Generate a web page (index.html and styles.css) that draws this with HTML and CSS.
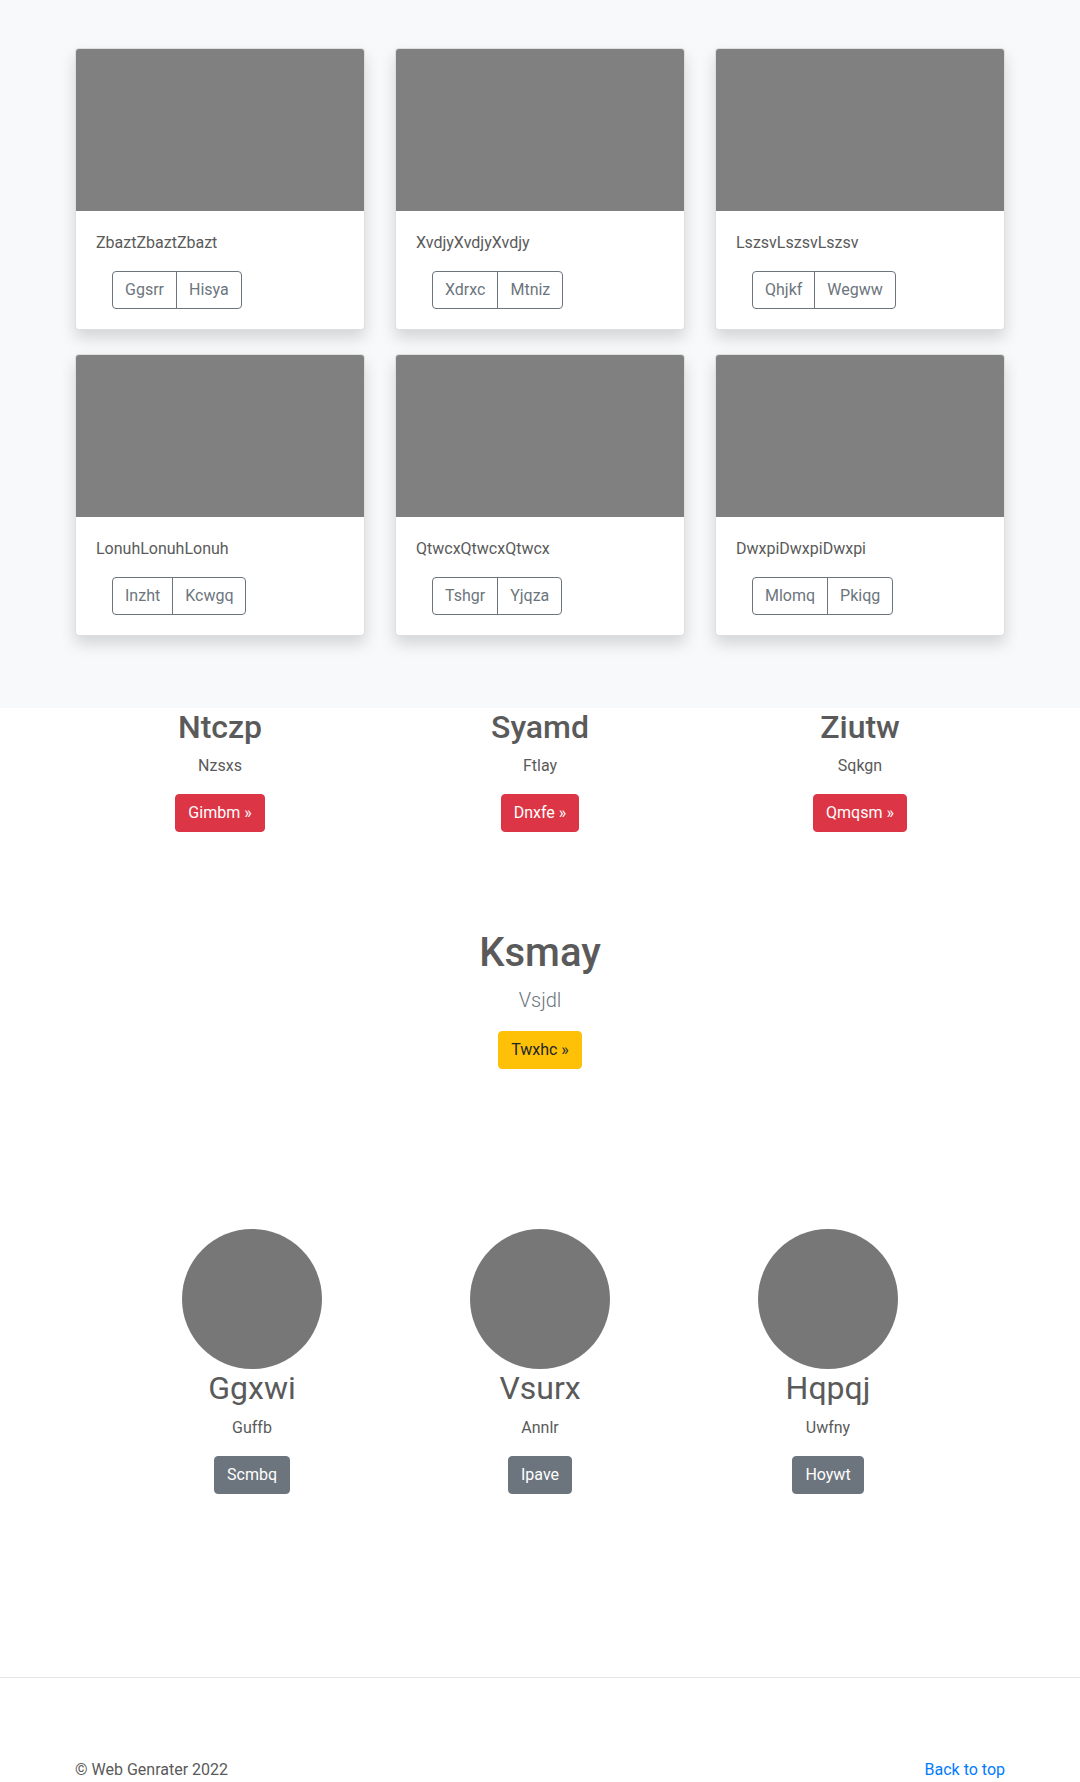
FILE: index.html
```html
<!DOCTYPE html>
<html lang="en">
<head>
<meta charset="utf-8">
<title>Web Genrater</title>
<link rel="stylesheet" href="styles.css">
</head>
<body>
<main>
  <section class="album">
    <div class="album-grid">
      <div class="card">
        <div class="card-img"></div>
        <div class="card-body">
          <p class="card-text">ZbaztZbaztZbazt</p>
          <div class="btn-group"><button class="btn btn-outline">Ggsrr</button><button class="btn btn-outline">Hisya</button></div>
        </div>
      </div>
      <div class="card">
        <div class="card-img"></div>
        <div class="card-body">
          <p class="card-text">XvdjyXvdjyXvdjy</p>
          <div class="btn-group"><button class="btn btn-outline">Xdrxc</button><button class="btn btn-outline">Mtniz</button></div>
        </div>
      </div>
      <div class="card">
        <div class="card-img"></div>
        <div class="card-body">
          <p class="card-text">LszsvLszsvLszsv</p>
          <div class="btn-group"><button class="btn btn-outline">Qhjkf</button><button class="btn btn-outline">Wegww</button></div>
        </div>
      </div>
      <div class="card">
        <div class="card-img"></div>
        <div class="card-body">
          <p class="card-text">LonuhLonuhLonuh</p>
          <div class="btn-group"><button class="btn btn-outline">Inzht</button><button class="btn btn-outline">Kcwgq</button></div>
        </div>
      </div>
      <div class="card">
        <div class="card-img"></div>
        <div class="card-body">
          <p class="card-text">QtwcxQtwcxQtwcx</p>
          <div class="btn-group"><button class="btn btn-outline">Tshgr</button><button class="btn btn-outline">Yjqza</button></div>
        </div>
      </div>
      <div class="card">
        <div class="card-img"></div>
        <div class="card-body">
          <p class="card-text">DwxpiDwxpiDwxpi</p>
          <div class="btn-group"><button class="btn btn-outline">Mlomq</button><button class="btn btn-outline">Pkiqg</button></div>
        </div>
      </div>
    </div>
  </section>

  <section class="features">
    <div class="feature">
      <h2 class="feature-title">Ntczp</h2>
      <p class="text">Nzsxs</p>
      <p class="text"><a class="btn btn-danger" href="#">Gimbm &raquo;</a></p>
    </div>
    <div class="feature">
      <h2 class="feature-title">Syamd</h2>
      <p class="text">Ftlay</p>
      <p class="text"><a class="btn btn-danger" href="#">Dnxfe &raquo;</a></p>
    </div>
    <div class="feature">
      <h2 class="feature-title">Ziutw</h2>
      <p class="text">Sqkgn</p>
      <p class="text"><a class="btn btn-danger" href="#">Qmqsm &raquo;</a></p>
    </div>
  </section>

  <section class="hero">
    <h1 class="hero-title">Ksmay</h1>
    <p class="lead">Vsjdl</p>
    <p class="text"><a class="btn btn-warning" href="#">Twxhc &raquo;</a></p>
  </section>

  <section class="marketing">
    <div class="person">
      <div class="avatar"></div>
      <h2 class="person-name">Ggxwi</h2>
      <p class="text">Guffb</p>
      <p class="text"><a class="btn btn-secondary" href="#">Scmbq</a></p>
    </div>
    <div class="person">
      <div class="avatar"></div>
      <h2 class="person-name">Vsurx</h2>
      <p class="text">Annlr</p>
      <p class="text"><a class="btn btn-secondary" href="#">Ipave</a></p>
    </div>
    <div class="person">
      <div class="avatar"></div>
      <h2 class="person-name">Hqpqj</h2>
      <p class="text">Uwfny</p>
      <p class="text"><a class="btn btn-secondary" href="#">Hoywt</a></p>
    </div>
  </section>

  <div class="divider"></div>

  <footer class="footer">
    <p class="text">&copy; Web Genrater 2022</p>
    <p class="text"><a class="link" href="#">Back to top</a></p>
  </footer>
</main>
</body>
</html>
```

FILE: styles.css
```css
* { box-sizing: border-box; }

body {
  margin: 0;
  font-family: Roboto, "Liberation Sans", sans-serif;
  font-size: 16px;
  line-height: 1.5;
  color: #5a5a5a;
  background: #fff;
}

.text { margin: 0 0 16px; }

/* album */
.album {
  background: #f8f9fa;
  padding: 48px 0 48px;
}
.album-grid {
  width: 930px;
  margin: 0 auto;
  display: grid;
  grid-template-columns: repeat(3, 1fr);
  column-gap: 30px;
}
.card {
  background: #fff;
  border: 1px solid rgba(0, 0, 0, .125);
  border-radius: 4px;
  box-shadow: 0 8px 16px rgba(0, 0, 0, .15);
  overflow: hidden;
  margin-bottom: 24px;
}
.card-img {
  height: 162px;
  background: #808080;
}
.card-body { padding: 20px; }
.card-text { margin: 0 0 16px; }

.btn-group {
  display: inline-flex;
  margin-left: 16px;
}

.btn {
  display: inline-block;
  font-family: inherit;
  font-size: 16px;
  line-height: 24px;
  padding: 6px 12px;
  border: 1px solid transparent;
  border-radius: 4px;
  text-decoration: none;
  font-weight: 400;
  cursor: pointer;
}
.btn-outline {
  background: transparent;
  color: #6c757d;
  border-color: #6c757d;
}
.btn-group .btn-outline:first-child {
  border-top-right-radius: 0;
  border-bottom-right-radius: 0;
}
.btn-group .btn-outline + .btn-outline {
  margin-left: -1px;
  border-top-left-radius: 0;
  border-bottom-left-radius: 0;
}
.btn-danger { background: #dc3545; border-color: #dc3545; color: #fff; }
.btn-warning { background: #ffc107; border-color: #ffc107; color: #212529; }
.btn-secondary { background: #6c757d; border-color: #6c757d; color: #fff; }

/* features */
.features {
  width: 960px;
  margin: 0 auto;
  display: grid;
  grid-template-columns: repeat(3, 1fr);
  text-align: center;
}
.feature { padding: 0 15px; }
.feature-title {
  font-size: 32px;
  font-weight: 500;
  line-height: 1.2;
  margin: 0 0 8px;
}

/* hero */
.hero {
  text-align: center;
  padding-top: 81px;
}
.hero-title {
  font-size: 40px;
  font-weight: 500;
  line-height: 1.2;
  margin: 0 0 8px;
}
.lead {
  font-size: 20px;
  font-weight: 300;
  line-height: 1.5;
  color: #6c757d;
  margin: 0 0 16px;
}

/* marketing */
.marketing {
  width: 864px;
  margin: 160px auto 0;
  display: grid;
  grid-template-columns: repeat(3, 1fr);
  text-align: center;
  padding-bottom: 167px;
}
.avatar {
  width: 140px;
  height: 140px;
  border-radius: 50%;
  background: #777;
  margin: 0 auto;
}
.person-name {
  font-size: 32px;
  font-weight: 400;
  line-height: 1.2;
  margin: 0 0 8px;
}

.divider {
  border-top: 1px solid rgba(0, 0, 0, .1);
}

.footer {
  width: 930px;
  margin: 0 auto;
  padding-top: 80px;
  display: flex;
  justify-content: space-between;
}
.link { color: #007bff; text-decoration: none; }
```
